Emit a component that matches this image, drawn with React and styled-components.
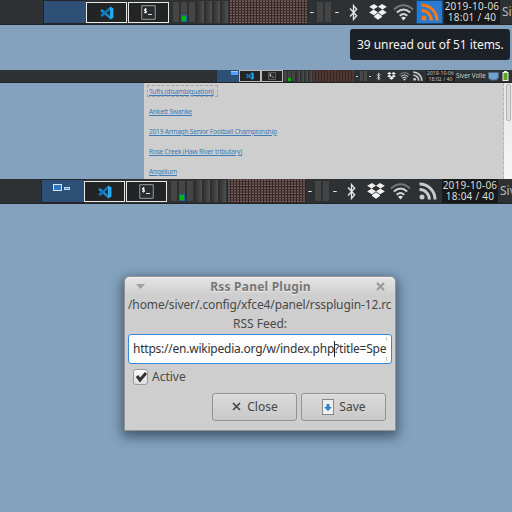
import React from "react";
import styled, { createGlobalStyle, css } from "styled-components";

const Global = createGlobalStyle`
  * { box-sizing: border-box; }
  body { margin: 0; background: #84a2be; font-family: "Noto Sans", sans-serif; overflow: hidden; }
  svg { display: block; flex: none; }
`;

const Desktop = styled.main`
  width: 512px;
  height: 512px;
  display: flex;
  flex-direction: column;
  background: #84a2be;
  overflow: hidden;
`;

const Panel = styled.header`
  display: flex;
  flex: none;
  width: 512px;
  height: ${(p) => (p.$small ? 13 : 25)}px;
  padding-left: ${(p) => p.$start}px;
  background: #2d3134;
  border-bottom: 1px solid #222528;
  overflow: hidden;
`;

const Workspace = styled.div`
  flex: none;
  width: ${(p) => (p.$small ? 22 : 42)}px;
  height: ${(p) => (p.$small ? 12 : 22)}px;
  margin-top: ${(p) => (p.$small ? 0 : 1)}px;
  background: #2e5076;
  outline: ${(p) => (p.$small ? "none" : "1px solid #242526")};
`;

const TaskCell = styled.div`
  flex: none;
  display: flex;
  align-items: center;
  justify-content: center;
  width: ${(p) => (p.$small ? 22 : 41)}px;
  height: ${(p) => (p.$small ? 12 : 21)}px;
  margin: ${(p) => (p.$small ? "0" : "2px 1px 0 0")};
  background: #232425;
  border: 1px solid ${(p) => (p.$small ? "#b9b9b7" : "#e9e9e5")};
`;

const Meters = styled.div`
  flex: none;
  display: flex;
  width: ${(p) => p.$w}px;
  padding: ${(p) => (p.$small ? "1px 1px 1px 1px" : "2px 0 0 3px")};
  gap: ${(p) => (p.$small ? 1 : 2)}px;
`;

const Meter = styled.div`
  flex: none;
  display: flex;
  align-items: flex-end;
  width: ${(p) => (p.$small ? 3 : 6)}px;
  height: ${(p) => (p.$small ? 10 : 20)}px;
  background: #454545;
  ${(p) =>
    p.$shaded &&
    css`
      height: ${p.$small ? 11 : 22}px;
      margin-top: ${p.$small ? 0 : -1}px;
      margin-left: ${p.$first ? 1 : 0}px;
      background: linear-gradient(90deg, #343434, #505050);
    `}
`;

const Load = styled.div`
  width: 100%;
  height: ${(p) => (p.$small ? 3 : 7)}px;
  background: #00b900;
  border: ${(p) => (p.$small ? "0" : "1px solid #1967a5")};
`;

const Divider = styled.div`
  flex: none;
  display: flex;
  align-items: center;
  width: ${(p) => p.$w}px;
  padding-left: ${(p) => p.$pad}px;
`;

const Dash = styled.div`
  width: ${(p) => (p.$small ? 2 : 4)}px;
  height: 1px;
  background: linear-gradient(90deg, #75b0df, #fff 40%, #d99358);
`;

const Tray = styled.div`
  flex: none;
  display: flex;
  align-items: center;
  justify-content: center;
  width: ${(p) => p.$w}px;
  background: ${(p) => (p.$active ? "#287bd2" : "transparent")};
  outline: ${(p) => (p.$active ? "1px solid #1d4974" : "none")};
  outline-offset: -1px;
`;

const Clock = styled.div`
  flex: none;
  width: ${(p) => (p.$small ? 29 : 56)}px;
  height: ${(p) => (p.$small ? 12 : 24)}px;
  margin-left: ${(p) => (p.$small ? 0 : 1)}px;
  background: ${(p) => (p.$small ? "#202225" : "#17191b")};
  color: ${(p) => (p.$small ? "#c3c5c6" : "#dcdedc")};
  font-size: ${(p) => (p.$small ? 5 : 10)}px;
  letter-spacing: ${(p) => (p.$small ? 0.1 : 0.25)}px;
  line-height: ${(p) => (p.$small ? 6 : 11)}px;
  padding-top: ${(p) => (p.$small ? 0 : 1)}px;
  text-align: center;
  white-space: nowrap;
`;

const ClockLine = styled.div`
  height: ${(p) => (p.$small ? 6 : 11)}px;
`;

const User = styled.div`
  flex: none;
  color: ${(p) => (p.$small ? "#c7d1d9" : "#b6b8b9")};
  font-size: ${(p) => (p.$small ? 6.2 : 12)}px;
  line-height: ${(p) => (p.$small ? 12 : 23)}px;
  padding-left: ${(p) => (p.$small ? 1 : 2)}px;
  width: ${(p) => (p.$small ? 33 : 60)}px;
  white-space: nowrap;
`;

const TooltipArea = styled.section`
  display: flex;
  flex: none;
  justify-content: flex-end;
  height: 45px;
  padding: 4px 2px 0 0;
`;

const Tooltip = styled.div`
  width: 160px;
  height: 31px;
  border-radius: 3px;
  background: #1c2127;
  color: #f4f4f4;
  font-size: 12px;
  letter-spacing: -0.06px;
  line-height: 31px;
  padding-left: 7px;
  white-space: nowrap;
`;

const Browser = styled.section`
  display: flex;
  flex: none;
  height: 96px;
  padding-left: 144px;
`;

const Links = styled.div`
  flex: 1;
  display: flex;
  flex-direction: column;
  align-items: flex-start;
  padding: 2px 0 0 3px;
  background: #cecece;
  border-right: 1px dashed #b4b4b4;
`;

const FeedLink = styled.a`
  flex: none;
  height: 12px;
  margin-bottom: 8px;
  padding: 0 1px;
  border: 1px dashed ${(p) => (p.$focused ? "#a4a4a4" : "transparent")};
  color: #3b7bb8;
  font-size: 6.6px;
  line-height: 11px;
  letter-spacing: -0.22px;
  text-decoration: underline;
  text-decoration-thickness: 1px;
  text-underline-offset: 1px;
  white-space: nowrap;
  ${(p) => p.$focused && "padding-right: 3px;"}
`;

const Scrollbar = styled.div`
  width: 8px;
  padding: 1px 1px 0 2px;
  background: linear-gradient(#e5e5e5, #f7f7f7);
`;

const Thumb = styled.div`
  height: 37px;
  border: 1px solid #b2b2b2;
  border-radius: 2px;
  background: #dcdcdc;
`;

const Stage = styled.section`
  flex: 1;
  display: flex;
  align-items: flex-start;
  padding: 72px 0 0 124px;
`;

const Dialog = styled.form`
  width: 272px;
  height: 155px;
  border: 1px solid #929292;
  border-radius: 6px 6px 1px 1px;
  background: #cecece;
  box-shadow: 0 4px 12px 2px rgba(24, 39, 54, 0.6);
  color: #494949;
  font-size: 12px;
  padding: 0 3px;
`;

const TitleBar = styled.div`
  display: flex;
  align-items: center;
  justify-content: space-between;
  height: 18px;
  margin: 0 -3px;
  padding: 0 10px 0 11px;
  border-radius: 5px 5px 0 0;
  background: linear-gradient(#e5e5e5, #cecece);
  box-shadow: inset 0 1px #f2f2f2;
  color: #777;
  text-shadow: 0 1px #eee;
  font-size: 12px;
  font-weight: 700;
  letter-spacing: 0.22px;
  line-height: 17px;
`;

const Path = styled.div`
  height: 19px;
  line-height: 20px;
  letter-spacing: ${(p) => p.$track || 0}px;
  text-align: ${(p) => p.$align || "left"};
  white-space: nowrap;
`;

const UrlField = styled.div`
  display: flex;
  align-items: center;
  width: 264px;
  height: 30px;
  margin-top: 1px;
  padding: 0 4px;
  border: 1px solid #3489df;
  border-radius: 3px;
  background: #fdfdfd;
  color: #333;
  white-space: nowrap;
`;

const UrlText = styled.div`
  display: flex;
  align-items: center;
  width: 255px;
  height: 24px;
  line-height: 16px;
  padding-bottom: 1px;
  letter-spacing: -0.23px;
  background: linear-gradient(#c9c9c9 0 4px, transparent 4px 20px, #c9c9c9 20px) right / 1px 100% no-repeat;
`;

const Caret = styled.span`
  width: 1px;
  height: 16px;
  margin-right: -1px;
  background: #222;
`;

const CheckRow = styled.label`
  display: flex;
  align-items: center;
  gap: 4px;
  height: 25px;
  padding-left: 5px;
`;

const CheckBox = styled.span`
  width: 15px;
  height: 16px;
  border: 1px solid #9b9b9b;
  border-radius: 3px;
  background: linear-gradient(#fafafa, #dedede);
`;

const Actions = styled.div`
  display: flex;
  justify-content: flex-end;
  gap: 4px;
  padding: 4px 6px 0 0;
`;

const Button = styled.button`
  display: flex;
  align-items: center;
  justify-content: center;
  gap: ${(p) => p.$gap}px;
  width: 85px;
  height: 28px;
  padding: 0 0 1px 1px;
  border: 1px solid #929292;
  border-radius: 3px;
  background: linear-gradient(#dadada, #c9c9c9);
  box-shadow: inset 0 1px #e3e3e3;
  font: 12px "Noto Sans", sans-serif;
  letter-spacing: 0.05px;
  color: #454545;
`;

const TallMeter = styled.div`
  flex: none;
  width: 6px;
  height: 20px;
  margin: 2px 1px 0;
  background: #444;
`;

const SmallMeter = styled.div`
  flex: none;
  width: 3px;
  height: 10px;
  margin: 1px 1px 0 0;
  background: #494949;
`;

const CodeIcon = ({ s = 14 }) => (
  <svg width={s} height={s} viewBox="0 0 24 24">
    <path d="M1 7l3-2 14 13v5L1 9z" fill="#168bd0" />
    <path d="M1 17l3 2L18 6V1L1 15z" fill="#1475b5" />
    <path d="M17 1l6 3v16l-6 3z" fill="#29a8ee" />
  </svg>
);

const TerminalIcon = ({ s = 15 }) => (
  <svg width={s} height={s} viewBox="0 0 15 15">
    <rect x=".7" y=".7" width="13.6" height="13.6" rx=".7" fill="#292c2e" stroke="#858585" strokeWidth="1.2" />
    <path d="M5.8 4.2H3.5v1.7h2v1.7H3M4.5 3v5.5M7 9.5H11" fill="none" stroke="#e5e5e5" strokeWidth="1" />
  </svg>
);

const BluetoothIcon = ({ w, h }) => (
  <svg width={w} height={h} viewBox="0 0 8 16">
    <path d="M.7 4.2L7 11l-3 3.5v-13L7 5 .7 11.8" fill="none" stroke="#e2e4e5" strokeWidth="1.3" />
  </svg>
);

const DropboxIcon = ({ w, h }) => (
  <svg width={w} height={h} viewBox="0 0 18 16" fill="#f2f2f2">
    <path d="M5 0l4 2.8-4.5 2.7L.2 2.8zM13 0l4.8 2.8-4.3 2.7L9 2.8zM.2 8.4l4.3-2.9L9 8.3l-4 2.9zM9 8.3l4.5-2.8 4.3 2.9-4.8 2.8zM5 12l4-2.8 4 2.8v1l-4 2.7L5 13z" />
  </svg>
);

const WifiIcon = ({ w, h }) => (
  <svg width={w} height={h} viewBox="0 0 22 17" preserveAspectRatio="none" fill="none" strokeWidth="2">
    <path d="M1 5.4Q11-3 21 5.4" stroke="#73777a" />
    <path d="M4 8.6Q11 2.5 18 8.6M7 11.8q4-3.6 8 0" stroke="#d1d3d4" />
    <path d="M8.5 13.7q2.5-1.7 5 0L11 16.5z" fill="#e5e5e5" />
  </svg>
);

const RssIcon = ({ s, color = "#c9cacb" }) => (
  <svg width={s} height={s} viewBox="0 0 18 18">
    <circle cx="3" cy="15" r="2.5" fill={color} />
    <path d="M.5 7.6A9.8 9.8 0 0 1 10.4 17.5M.5 2A15.5 15.5 0 0 1 16 17.5" fill="none" stroke={color} strokeWidth="3" />
  </svg>
);

const MemoryGrid = ({ w, h, id }) => (
  <svg width={w} height={h}>
    <defs>
      <pattern id={id} width="3" height={h > 20 ? 2.67 : 2} patternUnits="userSpaceOnUse">
        {h > 20 ? (
          <rect x="1" y=".5" width="2" height="1.1" fill="#967b76" />
        ) : (
          <rect width="2" height="2" fill="#503632" />
        )}
      </pattern>
    </defs>
    <rect width={w} height={h} fill="#332625" />
    <rect width={w} height={h > 20 ? h - 1 : h} fill={`url(#${id})`} />
  </svg>
);

const WindowsIcon = () => (
  <svg width="42" height="22">
    <rect x="11.5" y="4.5" width="8" height="6" fill="#2d76c5" stroke="#d9e1e8" />
    <rect x="22.5" y="7.5" width="5" height="2" fill="#418ddd" stroke="#c8dbed" />
  </svg>
);

const PreviewIcon = () => (
  <svg width="22" height="12">
    <rect x="14" y="1" width="7" height="4" fill="#55a3fa" />
    <path d="M14 1.5h7" stroke="#9ac8f8" />
  </svg>
);

const MonitorIcon = () => (
  <svg width="11" height="10" viewBox="0 0 11 10">
    <path d="M.5 1.5h10v6H9V9H2V7.5H.5z" fill="#71a0ce" stroke="#4c6780" />
  </svg>
);

const BatteryIcon = () => (
  <svg width="7" height="10" viewBox="0 0 7 10">
    <rect x="2" width="3" height="2" fill="#eee" />
    <rect x="1" y="1.5" width="5" height="8" fill="#58a71d" stroke="#eee" />
  </svg>
);

function MeterSet({ small, w }) {
  return (
    <Meters $small={small} $w={w}>
      {[0, 1, 2].map((i) => (
        <Meter key={i} $small={small}>{i === 1 && <Load $small={small} />}</Meter>
      ))}
      {[0, 1, 2, 3].map((i) => (
        <Meter key={i} $small={small} $shaded $first={i === 0} />
      ))}
    </Meters>
  );
}

function LargePanel({ start, time, open, active, id }) {
  return (
    <Panel $start={start}>
      <Workspace>{open && <WindowsIcon />}</Workspace>
      <TaskCell><CodeIcon /></TaskCell>
      <TaskCell><TerminalIcon /></TaskCell>
      <MeterSet w={59} />
      <MemoryGrid w={79} h={24} id={id} />
      <Divider $w={8} $pad={2}><Dash /></Divider>
      <TallMeter /><TallMeter />
      <Divider $w={11} $pad={3}><Dash /></Divider>
      <Tray $w={20}><BluetoothIcon w={9} h={17} /></Tray>
      <Tray $w={29}><DropboxIcon w={18} h={16} /></Tray>
      <Tray $w={active ? 23 : 21}><WifiIcon w={21} h={17} /></Tray>
      <Tray $w={active ? 1 : 3} />
      <Tray $w={27} $active={active}><RssIcon s={18} color={active ? "#f77913" : undefined} /></Tray>
      <Clock>
        <ClockLine>2019-10-06</ClockLine>
        <ClockLine>{time}</ClockLine>
      </Clock>
      <User>Siver Volle</User>
    </Panel>
  );
}

function SmallPanel() {
  return (
    <Panel $small $start={217}>
      <Workspace $small><PreviewIcon /></Workspace>
      <TaskCell $small><CodeIcon s={8} /></TaskCell>
      <TaskCell $small><TerminalIcon s={8} /></TaskCell>
      <MeterSet small w={30} />
      <MemoryGrid w={41} h={12} id="memory-small" />
      <Divider $w={6} $pad={2}><Dash $small /></Divider>
      <SmallMeter /><SmallMeter />
      <Divider $w={5} $pad={1}><Dash $small /></Divider>
      <Tray $w={11}><BluetoothIcon w={5} h={9} /></Tray>
      <Tray $w={14}><DropboxIcon w={9} h={8} /></Tray>
      <Tray $w={12}><WifiIcon w={11} h={9} /></Tray>
      <Tray $w={16}><RssIcon s={10} /></Tray>
      <Clock $small>
        <ClockLine $small>2019-10-06</ClockLine>
        <ClockLine $small>18:02 / 40</ClockLine>
      </Clock>
      <User $small>Siver Volle</User>
      <Tray $w={11}><MonitorIcon /></Tray>
      <Tray $w={13}><BatteryIcon /></Tray>
    </Panel>
  );
}

export default function App() {
  return (
    <>
      <Global />
      <Desktop>
        <LargePanel start={44} time="18:01 / 40" active id="memory-top" />
        <TooltipArea><Tooltip>39 unread out of 51 items.</Tooltip></TooltipArea>
        <SmallPanel />
        <Browser>
          <Links>
            <FeedLink $focused>Tufts (disambiguation)</FeedLink>
            <FeedLink>Ankett Swanke</FeedLink>
            <FeedLink>2019 Armagh Senior Football Championship</FeedLink>
            <FeedLink>Rose Creek (Haw River tributary)</FeedLink>
            <FeedLink>Angelium</FeedLink>
          </Links>
          <Scrollbar><Thumb /></Scrollbar>
        </Browser>
        <LargePanel start={42} time="18:04 / 40" open id="memory-bottom" />
        <Stage>
          <Dialog>
            <TitleBar>
              <svg width="9" height="5"><path d="M0 0h9L4.5 5z" fill="#a0a0a0" /></svg>
              <span>Rss Panel Plugin</span>
              <svg width="9" height="9"><path d="M1 1l7 7M8 1L1 8" stroke="#999" strokeWidth="2" /></svg>
            </TitleBar>
            <Path $track={-0.12}>/home/siver/.config/xfce4/panel/rssplugin-12.rc</Path>
            <Path $align="center">RSS Feed:</Path>
            <UrlField>
              <UrlText><span>https://en.wikipedia.org/w/index.php</span><Caret /><span>?title=Spe</span></UrlText>
            </UrlField>
            <CheckRow>
              <CheckBox><svg width="14" height="14"><path d="M3 6l3 4 6-7" fill="none" stroke="#333" strokeWidth="3" /></svg></CheckBox>
              Active
            </CheckRow>
            <Actions>
              <Button type="button" $gap={6}>
                <svg width="9" height="9"><path d="M1 1l7 7M8 1L1 8" stroke="#454545" strokeWidth="1.7" /></svg>
                Close
              </Button>
              <Button type="button" $gap={5}>
                <svg width="12" height="16">
                  <rect x=".5" y=".5" width="11" height="15" fill="#eee" stroke="#888" />
                  <path d="M4.5 5h3v3H10l-4 4-4-4h2.5z" fill="#2881c9" />
                </svg>
                Save
              </Button>
            </Actions>
          </Dialog>
        </Stage>
      </Desktop>
    </>
  );
}
